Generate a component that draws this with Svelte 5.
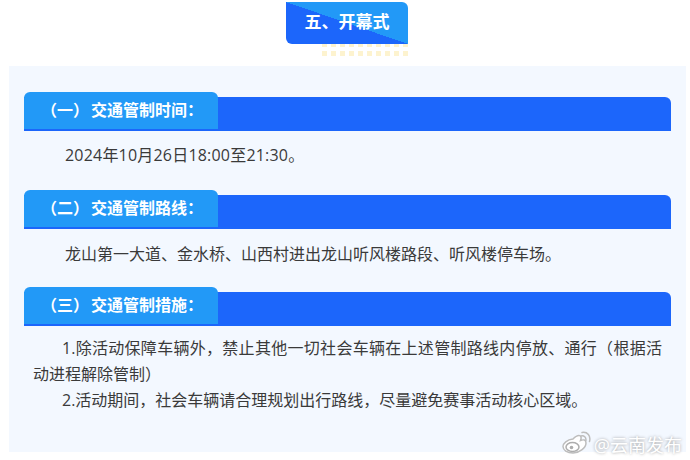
<script>
  const sections = [
    { num: "（一）", title: "交通管制时间：", lines: ["2024年10月26日18:00至21:30。"], kind: "date" },
    { num: "（二）", title: "交通管制路线：", lines: ["龙山第一大道、金水桥、山西村进出龙山听风楼路段、听风楼停车场。"], kind: "route" },
    {
      num: "（三）",
      title: "交通管制措施：",
      lines: [
        "1.除活动保障车辆外，禁止其他一切社会车辆在上述管制路线内停放、通行（根据活动进程解除管制）",
        "2.活动期间，社会车辆请合理规划出行路线，尽量避免赛事活动核心区域。",
      ],
      kind: "list",
    },
  ];
</script>

<div class="page">
  <div class="heading">
    <div class="badge">五、开幕式</div>
    <div class="dots"></div>
  </div>

  <div class="panel">
    {#each sections as section}
      <section>
        <div class="bar">
          <h3><span class="num">{section.num}</span>{section.title}</h3>
        </div>
        <div class="body {section.kind}">
          {#each section.lines as line}
            <p>{line}</p>
          {/each}
        </div>
      </section>
    {/each}
  </div>

  <div class="mark">
    <svg width="30" height="26" viewBox="0 0 30 26" fill="none">
      <path d="M12 8c3-3 6-4 7.500-3 1 1 .8 2.500 0 4.500 3-1.200 5.500-.8 5.500 2.500 0 5-7 10-13 10S2 19 2 15.500C2 12.500 6 8.500 12 8z" fill="#fff" stroke="#bdbdbd" stroke-width="1.500" />
      <ellipse cx="11.500" cy="16" rx="6.500" ry="4.500" stroke="#adadad" stroke-width="1.500" />
      <circle cx="10.500" cy="16.500" r="1.800" fill="#adadad" />
      <path d="M20 5c3-.8 5.500 1.500 4.800 4.500M21 1.500c5.500-1 9 3.500 7.500 9" stroke="#bdbdbd" stroke-width="1.500" stroke-linecap="round" />
    </svg>
    <span>@云南发布</span>
  </div>
</div>

<style>
  :global(body) {
    margin: 0;
    background: #fff;
  }

  .page {
    position: relative;
    width: 690px;
    height: 460px;
    overflow: hidden;
    padding-top: 2px;
    box-sizing: border-box;
    font-family: "Open Sans", "Noto Sans CJK SC", sans-serif;
  }

  .heading {
    width: 122px;
    margin-left: 286px;
    margin-bottom: 10px;
  }

  .badge {
    height: 42px;
    line-height: 40px;
    text-align: center;
    color: #fff;
    font-size: 17px;
    font-weight: 700;
    border-radius: 0 6px 0 6px;
    background: linear-gradient(to top right, #1c66fb 50%, #2299f7 50%);
  }

  .dots {
    width: 86px;
    height: 12px;
    margin-left: 36px;
    background-image:
      repeating-linear-gradient(90deg, #fdf3cf 0 5px, transparent 5px 9px),
      repeating-linear-gradient(90deg, #fdf3cf 0 5px, transparent 5px 9px);
    background-repeat: no-repeat;
    background-size: 100% 3px, 100% 5px;
    background-position: 0 0, 0 7px;
  }

  .panel {
    width: 677px;
    height: 386px;
    margin-left: 9px;
    padding: 26px 15px 0;
    box-sizing: border-box;
    background: #f3f8ff;
  }

  section {
    height: 93px;
  }

  section:nth-child(2) {
    height: 92px;
  }

  .bar {
    height: 34px;
    margin-top: 5px;
    border-radius: 0 6px 0 0;
    background: #1c66fb;
  }

  h3 {
    position: relative;
    top: -5px;
    width: 194px;
    height: 37px;
    margin: 0;
    padding-left: 17px;
    box-sizing: border-box;
    line-height: 36px;
    font-size: 16px;
    font-weight: 700;
    color: #fff;
    white-space: nowrap;
    background: #2299f7;
    border-radius: 6px 6px 0 0;
  }

  .num {
    margin-right: 2px;
  }

  .body {
    padding: 11px 9px 0;
  }

  .body.route {
    padding-top: 12px;
  }

  .body.list {
    padding-top: 9px;
  }

  p {
    margin: 0;
    font-size: 16px;
    line-height: 26px;
    text-indent: 2em;
    text-align: justify;
    color: #3a3a3a;
  }

  .date p {
    letter-spacing: 0.2px;
  }

  .list p {
    text-indent: 29px;
  }

  .mark {
    position: absolute;
    right: 8px;
    bottom: 3px;
    display: flex;
    align-items: center;
    gap: 3px;
    color: #fff;
    font-size: 18px;
    text-shadow: 0 0 3px #999;
  }
</style>
